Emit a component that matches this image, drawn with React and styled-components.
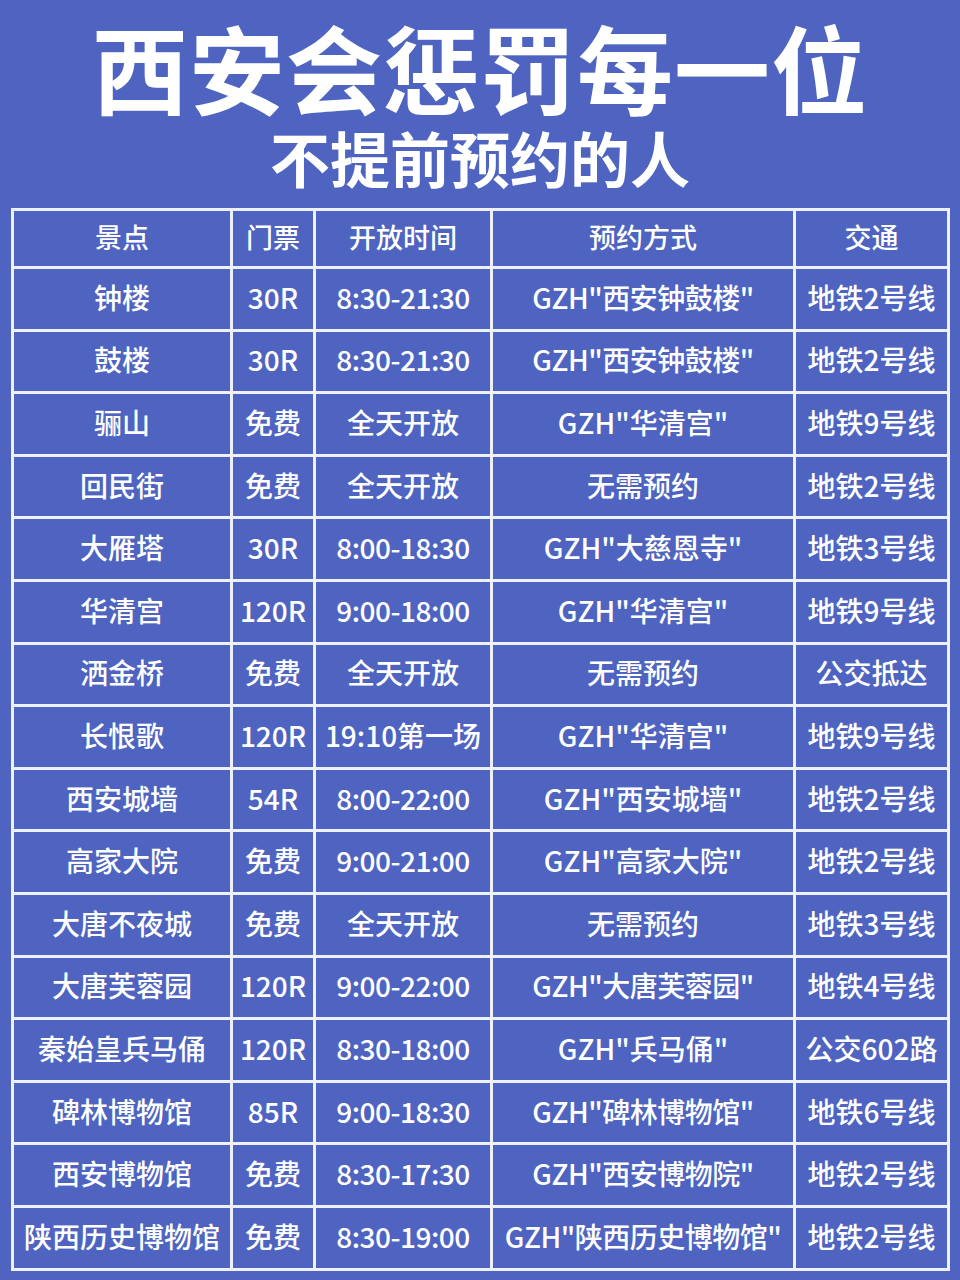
import React from "react";
import styled, { createGlobalStyle } from "styled-components";

const Global = createGlobalStyle`
  html, body { margin: 0; padding: 0; background: #4e64c0; }
  body { font-family: "Noto Sans CJK SC", "Noto Sans", sans-serif; }
`;

const Page = styled.div`
  width: 960px;
  height: 1280px;
  background: #4e64c0;
  color: #ffffff;
  display: flex;
  flex-direction: column;
  align-items: center;
  padding-top: 11px;
  box-sizing: border-box;
  overflow: hidden;
`;

const Title = styled.h1`
  margin: 0;
  font-size: 96px;
  line-height: 110px;
  font-weight: 700;
  letter-spacing: 1px;
  text-align: center;
`;

const Subtitle = styled.h2`
  margin: 0;
  font-size: 60px;
  line-height: 72px;
  font-weight: 700;
  text-align: center;
`;

const Table = styled.div`
  margin-top: 15px;
  align-self: flex-start;
  margin-left: 11px;
  display: grid;
  grid-template-columns: 216px 80px 174px 300px 151px;
  grid-template-rows: 55px repeat(16, 59.6px);
  gap: 3px;
  padding: 3px;
  background: #eef0fa;
`;

const Cell = styled.div`
  background: #4e64c0;
  display: flex;
  align-items: center;
  justify-content: center;
  font-size: ${(p) => (p.$header ? "27px" : "28px")};
  font-weight: 500;
  white-space: nowrap;
  letter-spacing: ${(p) => (p.$tight ? "-0.5px" : "0")};
  padding-bottom: 4px;
  box-sizing: border-box;
`;

const header = ["景点", "门票", "开放时间", "预约方式", "交通"];

const rows = [
  ["钟楼", "30R", "8:30-21:30", 'GZH"西安钟鼓楼"', "地铁2号线"],
  ["鼓楼", "30R", "8:30-21:30", 'GZH"西安钟鼓楼"', "地铁2号线"],
  ["骊山", "免费", "全天开放", 'GZH"华清宫"', "地铁9号线"],
  ["回民街", "免费", "全天开放", "无需预约", "地铁2号线"],
  ["大雁塔", "30R", "8:00-18:30", 'GZH"大慈恩寺"', "地铁3号线"],
  ["华清宫", "120R", "9:00-18:00", 'GZH"华清宫"', "地铁9号线"],
  ["洒金桥", "免费", "全天开放", "无需预约", "公交抵达"],
  ["长恨歌", "120R", "19:10第一场", 'GZH"华清宫"', "地铁9号线"],
  ["西安城墙", "54R", "8:00-22:00", 'GZH"西安城墙"', "地铁2号线"],
  ["高家大院", "免费", "9:00-21:00", 'GZH"高家大院"', "地铁2号线"],
  ["大唐不夜城", "免费", "全天开放", "无需预约", "地铁3号线"],
  ["大唐芙蓉园", "120R", "9:00-22:00", 'GZH"大唐芙蓉园"', "地铁4号线"],
  ["秦始皇兵马俑", "120R", "8:30-18:00", 'GZH"兵马俑"', "公交602路"],
  ["碑林博物馆", "85R", "9:00-18:30", 'GZH"碑林博物馆"', "地铁6号线"],
  ["西安博物馆", "免费", "8:30-17:30", 'GZH"西安博物院"', "地铁2号线"],
  ["陕西历史博物馆", "免费", "8:30-19:00", 'GZH"陕西历史博物馆"', "地铁2号线"],
];

export default function App() {
  return (
    <>
      <Global />
      <Page>
        <Title>西安会惩罚每一位</Title>
        <Subtitle>不提前预约的人</Subtitle>
        <Table>
          {header.map((h) => (
            <Cell key={h} $header>
              {h}
            </Cell>
          ))}
          {rows.map((r, i) =>
            r.map((c, j) => (
              <Cell key={i + "-" + j} $tight={c.length > 9}>
                {c}
              </Cell>
            ))
          )}
        </Table>
      </Page>
    </>
  );
}
